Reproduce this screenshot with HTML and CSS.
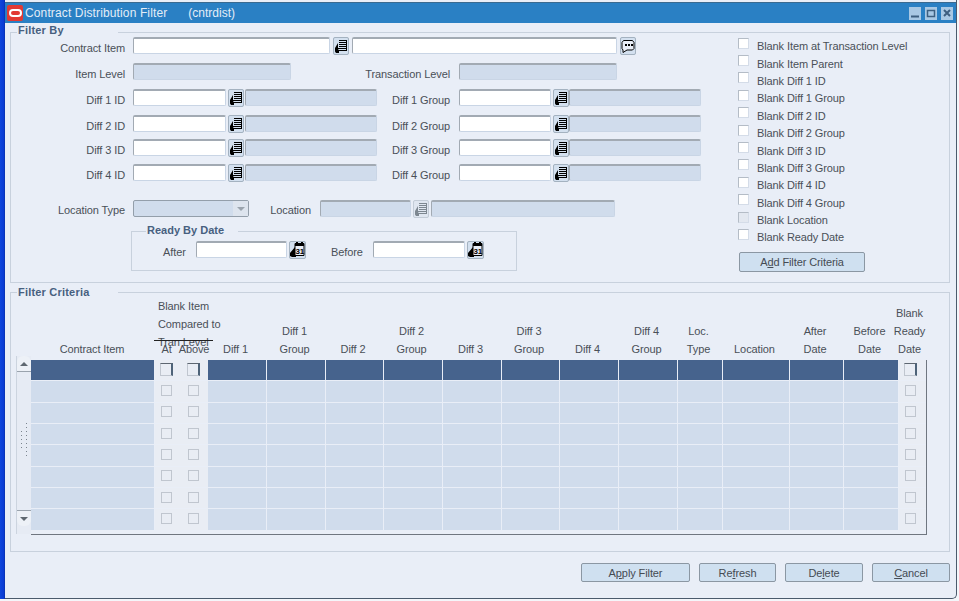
FILE: index.html
```html
<!DOCTYPE html>
<html lang="en">
<head>
<meta charset="utf-8">
<title>Contract Distribution Filter</title>
<link rel="stylesheet" href="styles.css">
</head>
<body>
<svg class="defs" width="0" height="0" aria-hidden="true">
  <symbol id="lookup" viewBox="0 0 16 18">
    <path d="M6 3.500h7M6 5.500h7M6 7.500h7M6 9.500h7M5 11.500h8M5 13.500h8M13.500 3v11" stroke="#000" fill="none"/>
    <path d="M5 6 2 11v3.500L3 16h3v-2.500L5 12z" fill="#000"/>
  </symbol>
  <symbol id="lookup-off" viewBox="0 0 16 18">
    <path d="M6 3.500h7M6 5.500h7M6 7.500h7M6 9.500h7M5 11.500h8M5 13.500h8M13.500 3v11" stroke="#7d8790" fill="none"/>
    <path d="M5 6 2 11v3.500L3 16h3v-2.500L5 12z" fill="#7d8790"/>
  </symbol>
  <symbol id="comment" viewBox="0 0 16 18">
    <path d="M3.500 3.500h9l1.500 2v6l-1.500 1.500H7L3 15.500V13L2 11.500v-6z" fill="#e9eef7" stroke="#000"/>
    <path d="M5 7h2v2H5zM8 7h2v2H8zM11 7h2v2h-2z" fill="#000"/>
  </symbol>
</svg>

<div class="screen">
  <div class="strip"></div>
  <div class="window">
    <header class="titlebar">
      <span class="logo"><span class="logo-ring"></span></span>
      <span class="title">Contract Distribution Filter</span>
      <span class="title-code">(cntrdist)</span>
      <span class="winctrls">
        <span class="winbtn"><svg viewBox="0 0 12 12" width="12" height="12"><path d="M2 8.500h8v2H2z" fill="#3d5f80"/></svg></span>
        <span class="winbtn"><svg viewBox="0 0 12 12" width="12" height="12"><path d="M2.500 3.500h7v6h-7z" fill="none" stroke="#3d5f80" stroke-width="1.500"/></svg></span>
        <span class="winbtn"><svg viewBox="0 0 12 12" width="12" height="12"><path d="m3 3 6 6M9 3 3 9" fill="none" stroke="#3d5f80" stroke-width="2"/></svg></span>
      </span>
    </header>

    <main class="content">
      <section class="group group-filter">
        <h2 class="legend">Filter By</h2>
        <div class="form">
          <div class="row">
            <label class="lbl">Contract Item</label>
            <span class="fld w197"></span>
            <span class="btn-ico m3"><svg width="16" height="18"><use href="#lookup"/></svg></span>
            <span class="fld w265 m3"></span>
            <span class="btn-ico m3"><svg width="16" height="18"><use href="#comment"/></svg></span>
          </div>
          <div class="row row-9">
            <label class="lbl">Item Level</label>
            <span class="fld off w158"></span>
            <label class="lbl2 w159">Transaction Level</label>
            <span class="fld off w158"></span>
          </div>
          <div class="row row-9">
            <label class="lbl">Diff 1 ID</label>
            <span class="fld w93"></span>
            <span class="btn-ico m2"><svg width="16" height="18"><use href="#lookup"/></svg></span>
            <span class="fld off w132 m1"></span>
            <label class="lbl2 w73">Diff 1 Group</label>
            <span class="fld w92"></span>
            <span class="btn-ico m2"><svg width="16" height="18"><use href="#lookup"/></svg></span>
            <span class="fld off w132"></span>
          </div>
          <div class="row row-9">
            <label class="lbl">Diff 2 ID</label>
            <span class="fld w93"></span>
            <span class="btn-ico m2"><svg width="16" height="18"><use href="#lookup"/></svg></span>
            <span class="fld off w132 m1"></span>
            <label class="lbl2 w73">Diff 2 Group</label>
            <span class="fld w92"></span>
            <span class="btn-ico m2"><svg width="16" height="18"><use href="#lookup"/></svg></span>
            <span class="fld off w132"></span>
          </div>
          <div class="row row-7">
            <label class="lbl">Diff 3 ID</label>
            <span class="fld w93"></span>
            <span class="btn-ico m2"><svg width="16" height="18"><use href="#lookup"/></svg></span>
            <span class="fld off w132 m1"></span>
            <label class="lbl2 w73">Diff 3 Group</label>
            <span class="fld w92"></span>
            <span class="btn-ico m2"><svg width="16" height="18"><use href="#lookup"/></svg></span>
            <span class="fld off w132"></span>
          </div>
          <div class="row row-8">
            <label class="lbl">Diff 4 ID</label>
            <span class="fld w93"></span>
            <span class="btn-ico m2"><svg width="16" height="18"><use href="#lookup"/></svg></span>
            <span class="fld off w132 m1"></span>
            <label class="lbl2 w73">Diff 4 Group</label>
            <span class="fld w92"></span>
            <span class="btn-ico m2"><svg width="16" height="18"><use href="#lookup"/></svg></span>
            <span class="fld off w132"></span>
          </div>
          <div class="row row-19 row-loc">
            <label class="lbl">Location Type</label>
            <span class="select"><span class="select-arrow"><svg width="10" height="6" viewBox="0 0 10 6"><path d="M1 1h8L5 5z" fill="#9aa3ad"/></svg></span></span>
            <label class="lbl2 w62">Location</label>
            <span class="fld off w91"></span>
            <span class="btn-ico off m2"><svg width="16" height="18"><use href="#lookup-off"/></svg></span>
            <span class="fld off w184 m2"></span>
          </div>
          <section class="group group-date">
            <h3 class="legend legend-date">Ready By Date</h3>
            <div class="row">
              <label class="lbl3 after">After</label>
              <span class="fld w91"></span>
              <span class="btn-ico m2"><svg width="17" height="18" viewBox="0 0 17 18"><path d="M6 2.500h9v12H6z" fill="#e9eef7" stroke="#000"/><path d="M6 3h9v2H6zM7 1h2v2H7zM12 1h2v2h-2z" fill="#000"/><path d="M6 6 1 12v3l2 1h4v-2H6z" fill="#000"/><text x="6.500" y="13" class="cal-text">31</text></svg></span>
              <label class="lbl3 before">Before</label>
              <span class="fld w92"></span>
              <span class="btn-ico m2"><svg width="17" height="18" viewBox="0 0 17 18"><path d="M6 2.500h9v12H6z" fill="#e9eef7" stroke="#000"/><path d="M6 3h9v2H6zM7 1h2v2H7zM12 1h2v2h-2z" fill="#000"/><path d="M6 6 1 12v3l2 1h4v-2H6z" fill="#000"/><text x="6.500" y="13" class="cal-text">31</text></svg></span>
            </div>
          </section>
        </div>

        <div class="checks">
          <div class="chk-row"><span class="chk"></span>Blank Item at Transaction Level</div>
          <div class="chk-row"><span class="chk"></span>Blank Item Parent</div>
          <div class="chk-row"><span class="chk"></span>Blank Diff 1 ID</div>
          <div class="chk-row"><span class="chk"></span>Blank Diff 1 Group</div>
          <div class="chk-row"><span class="chk"></span>Blank Diff 2 ID</div>
          <div class="chk-row"><span class="chk"></span>Blank Diff 2 Group</div>
          <div class="chk-row"><span class="chk"></span>Blank Diff 3 ID</div>
          <div class="chk-row"><span class="chk"></span>Blank Diff 3 Group</div>
          <div class="chk-row"><span class="chk"></span>Blank Diff 4 ID</div>
          <div class="chk-row"><span class="chk"></span>Blank Diff 4 Group</div>
          <div class="chk-row"><span class="chk chk-off"></span>Blank Location</div>
          <div class="chk-row"><span class="chk"></span>Blank Ready Date</div>
          <button class="btn btn-add" type="button">A<u>d</u>d Filter Criteria</button>
        </div>
      </section>

      <section class="group group-criteria">
        <h2 class="legend legend-criteria">Filter Criteria</h2>
        <div class="scroller">
          <div class="scrollbar">
            <span class="sb-btn sb-up"><svg width="10" height="6" viewBox="0 0 10 6"><path d="M1 5h8L5 1z" fill="#5f6871"/></svg></span>
            <span class="sb-grip"><svg width="10" height="38" viewBox="0 0 10 38"><path d="M8 1 7 2M8 5 7 6M8 9 7 10M8 13 7 14M8 17 7 18M8 21 7 22M8 25 7 26M8 29 7 30M8 33 7 34M3 9 2 10M3 13 2 14M3 17 2 18M3 21 2 22M3 25 2 26" stroke="#7b858f" fill="none"/></svg></span>
            <span class="sb-btn sb-down"><svg width="10" height="6" viewBox="0 0 10 6"><path d="M1 1h8L5 5z" fill="#5f6871"/></svg></span>
          </div>
          <div class="tablecol">
            <div class="cols thead">
              <div class="th th-near">Contract Item</div>
              <div class="th-group">Blank Item<br>Compared to<br>Tran Level</div>
              <div class="th th-near c2">At</div>
              <div class="th th-wide c3">Above</div>
              <div class="th c4">Diff 1</div>
              <div class="th">Diff 1<br>Group</div>
              <div class="th">Diff 2</div>
              <div class="th">Diff 2<br>Group</div>
              <div class="th">Diff 3</div>
              <div class="th">Diff 3<br>Group</div>
              <div class="th">Diff 4</div>
              <div class="th">Diff 4<br>Group</div>
              <div class="th">Loc.<br>Type</div>
              <div class="th">Location</div>
              <div class="th">After<br>Date</div>
              <div class="th">Before<br>Date</div>
              <div class="th th-last">Blank<br>Ready<br>Date</div>
            </div>
            <div class="tbody">
              <div class="cols tr tr-on"><i class="td"></i><i class="tc"><b class="cb"></b></i><i class="tc"><b class="cb"></b></i><i class="td"></i><i class="td"></i><i class="td"></i><i class="td"></i><i class="td"></i><i class="td"></i><i class="td"></i><i class="td"></i><i class="td"></i><i class="td"></i><i class="td"></i><i class="td"></i><i class="tc tc-last"><b class="cb"></b></i></div>
              <div class="cols tr"><i class="td"></i><i class="tc"><b class="cb"></b></i><i class="tc"><b class="cb"></b></i><i class="td"></i><i class="td"></i><i class="td"></i><i class="td"></i><i class="td"></i><i class="td"></i><i class="td"></i><i class="td"></i><i class="td"></i><i class="td"></i><i class="td"></i><i class="td"></i><i class="tc tc-last"><b class="cb"></b></i></div>
              <div class="cols tr"><i class="td"></i><i class="tc"><b class="cb"></b></i><i class="tc"><b class="cb"></b></i><i class="td"></i><i class="td"></i><i class="td"></i><i class="td"></i><i class="td"></i><i class="td"></i><i class="td"></i><i class="td"></i><i class="td"></i><i class="td"></i><i class="td"></i><i class="td"></i><i class="tc tc-last"><b class="cb"></b></i></div>
              <div class="cols tr"><i class="td"></i><i class="tc"><b class="cb"></b></i><i class="tc"><b class="cb"></b></i><i class="td"></i><i class="td"></i><i class="td"></i><i class="td"></i><i class="td"></i><i class="td"></i><i class="td"></i><i class="td"></i><i class="td"></i><i class="td"></i><i class="td"></i><i class="td"></i><i class="tc tc-last"><b class="cb"></b></i></div>
              <div class="cols tr"><i class="td"></i><i class="tc"><b class="cb"></b></i><i class="tc"><b class="cb"></b></i><i class="td"></i><i class="td"></i><i class="td"></i><i class="td"></i><i class="td"></i><i class="td"></i><i class="td"></i><i class="td"></i><i class="td"></i><i class="td"></i><i class="td"></i><i class="td"></i><i class="tc tc-last"><b class="cb"></b></i></div>
              <div class="cols tr"><i class="td"></i><i class="tc"><b class="cb"></b></i><i class="tc"><b class="cb"></b></i><i class="td"></i><i class="td"></i><i class="td"></i><i class="td"></i><i class="td"></i><i class="td"></i><i class="td"></i><i class="td"></i><i class="td"></i><i class="td"></i><i class="td"></i><i class="td"></i><i class="tc tc-last"><b class="cb"></b></i></div>
              <div class="cols tr"><i class="td"></i><i class="tc"><b class="cb"></b></i><i class="tc"><b class="cb"></b></i><i class="td"></i><i class="td"></i><i class="td"></i><i class="td"></i><i class="td"></i><i class="td"></i><i class="td"></i><i class="td"></i><i class="td"></i><i class="td"></i><i class="td"></i><i class="td"></i><i class="tc tc-last"><b class="cb"></b></i></div>
              <div class="cols tr"><i class="td"></i><i class="tc"><b class="cb"></b></i><i class="tc"><b class="cb"></b></i><i class="td"></i><i class="td"></i><i class="td"></i><i class="td"></i><i class="td"></i><i class="td"></i><i class="td"></i><i class="td"></i><i class="td"></i><i class="td"></i><i class="td"></i><i class="td"></i><i class="tc tc-last"><b class="cb"></b></i></div>
            </div>
          </div>
        </div>
      </section>

      <footer class="actions">
        <button class="btn w109" type="button">A<u>p</u>ply Filter</button>
        <button class="btn w77" type="button">Re<u>f</u>resh</button>
        <button class="btn w78" type="button">De<u>l</u>ete</button>
        <button class="btn w78" type="button"><u>C</u>ancel</button>
      </footer>
    </main>
  </div>
</div>
</body>
</html>
```

FILE: styles.css
```css
* { box-sizing: border-box; }
html, body { margin: 0; padding: 0; }
body {
  width: 959px;
  height: 601px;
  overflow: hidden;
  background: #f4f6fa;
  font: 11px/14px "Liberation Sans", Arial, sans-serif;
  letter-spacing: -0.1px;
  color: #4a5058;
}
.defs { position: absolute; }
.cal-text { font: bold 8px "Liberation Sans", Arial, sans-serif; fill: #000; }

.screen { display: flex; height: 599px; }
.strip {
  width: 5px;
  background: linear-gradient(90deg, #0f46dc 0, #0a3ad2 80%, #0a2f9e 100%);
}
.window {
  width: 952px;
  display: flex;
  flex-direction: column;
  background: #e9eef7;
  border-right: 1px solid #4a5a6c;
  border-bottom: 1px solid #4a5a6c;
  border-bottom-right-radius: 5px;
}

/* Title bar */
.titlebar {
  margin-top: 2px;
  height: 21px;
  flex: none;
  display: flex;
  align-items: center;
  padding-left: 2px;
  background: #2a80c4;
  border-top: 1px solid #3a6a90;
  color: #e4edf7;
  font-size: 12px;
  letter-spacing: 0;
}
.logo {
  width: 16px;
  height: 16px;
  background: #e23a34;
  display: flex;
  align-items: center;
  justify-content: center;
  border-radius: 2px;
}
.logo-ring {
  width: 13px;
  height: 8px;
  border: 2px solid #fff;
  border-radius: 4px;
}
.title { margin-left: 2px; letter-spacing: 0.13px; }
.title-code { margin-left: 21px; }
.winctrls { margin-left: auto; margin-right: 3px; display: flex; gap: 4px; }
.winbtn {
  width: 12px;
  height: 13px;
  background: #a8c8e4;
  display: flex;
  align-items: center;
  justify-content: center;
}

/* Content */
.content { flex: 1; padding: 9px 5px 0 5px; display: flex; flex-direction: column; }
.group { position: relative; border: 1px solid #c8d1dd; }
.group-filter { display: flex; height: 251px; width: 940px; }
.group-criteria { margin-top: 9px; height: 260px; width: 940px; }
.legend {
  position: absolute;
  left: 6px;
  top: -9px;
  width: 101px;
  margin: 0;
  padding-left: 1px;
  background: #e9eef7;
  color: #47607f;
  font-size: 11px;
  line-height: 13px;
  font-weight: bold;
  letter-spacing: 0.2px;
}
.legend-criteria { top: -7px; }
.form { width: 727px; padding-top: 4px; flex: none; }
.row { display: flex; align-items: center; height: 17px; }
.row-7 { margin-top: 7px; }
.row-8 { margin-top: 8px; }
.row-9 { margin-top: 9px; }
.row-19 { margin-top: 19px; }

.lbl { width: 114px; margin-right: 8px; padding-top: 4px; text-align: right; flex: none; }
.lbl2 { margin-right: 9px; padding-top: 4px; text-align: right; flex: none; }
.lbl3 { margin-right: 9px; padding-top: 4px; flex: none; }
.row-loc .lbl, .row-loc .lbl2 { padding-top: 2px; }
.after { width: 24px; }
.before { width: 33px; margin-left: 25px; }

.fld {
  display: block;
  height: 17px;
  flex: none;
  background: #fff;
  border-style: solid;
  border-width: 2px 1px 1px 1px;
  border-color: #a2aab3 #c9d5e5 #c9d5e5 #a2aab3;
  border-radius: 2px;
}
.fld.off { background: #d0dcec; }
.w62 { width: 62px; }
.w73 { width: 73px; }
.w91 { width: 91px; }
.w92 { width: 92px; }
.w93 { width: 93px; }
.w132 { width: 132px; }
.w158 { width: 158px; }
.w159 { width: 159px; }
.w184 { width: 184px; }
.w197 { width: 197px; }
.w265 { width: 265px; }
.m1 { margin-left: 1px; }
.m2 { margin-left: 2px; }
.m3 { margin-left: 3px; }

.btn-ico {
  flex: none;
  height: 18px;
  display: flex;
  background: #d3e0ef;
  border-radius: 2px;
  outline: 1px solid #a4b2c0;
  outline-offset: -1px;
}
.btn-ico.off { background: #dfe6f0; outline-color: #c3ccd7; }

.select {
  width: 116px;
  height: 17px;
  flex: none;
  display: flex;
  justify-content: flex-end;
  background: #d0dcec;
  border: 1px solid #939eaa;
  border-radius: 2px;
}
.select-arrow {
  width: 15px;
  background: #dde4ee;
  display: flex;
  align-items: center;
  justify-content: center;
}

.group-date {
  margin: 14px 0 0 120px;
  width: 386px;
  height: 40px;
  padding: 9px 0 0 31px;
}
.legend-date { left: 14px; top: -8px; width: 92px; padding-left: 1px; letter-spacing: 0; }

/* Checkbox column */
.checks { padding-top: 4.500px; }
.chk-row { display: flex; align-items: center; height: 17.400px; white-space: nowrap; }
.chk {
  width: 11px;
  height: 11px;
  margin: -6px 8px 0 0;
  background: #fff;
  border: 1px solid;
  border-color: #b4bcc6 #d4dce8 #d4dce8 #b4bcc6;
}
.chk-off { background: #e3e8f0; }
.btn {
  font: 11px/14px "Liberation Sans", Arial, sans-serif;
  letter-spacing: -0.1px;
  color: #454b53;
  height: 19px;
  padding: 0;
  background: #cfe0f0;
  border: 1px solid #8b97a3;
  border-radius: 2px;
}
.btn-add { width: 126px; height: 20px; margin: 6px 0 0 1px; }

/* Table */
.scroller { display: flex; padding-left: 5px; }
.scrollbar {
  width: 15px;
  margin-top: 63px;
  height: 178px;
  display: flex;
  flex-direction: column;
  align-items: center;
  background: #e6ebf4;
  border-left: 1px solid #ccd4df;
}
.sb-btn { width: 100%; height: 16px; flex: none; display: flex; align-items: center; justify-content: center; }
.sb-up { border-bottom: 1px solid #9aa3ad; border-radius: 6px 6px 0 0; background: #edf1f7; }
.sb-down { border-top: 1px solid #9aa3ad; border-radius: 0 0 6px 6px; background: #edf1f7; }
.sb-grip { margin-top: 50px; flex: none; height: 88px; }

.tablecol { width: 896px; }
.cols {
  display: grid;
  grid-template-columns: 124px 25px 28px 59px 59px 58px 59px 59px 58px 59px 59px 45px 67px 54px 55px 27px;
}
.thead { height: 67px; grid-template-rows: 67px; white-space: nowrap; }
.th {
  grid-row: 1;
  align-self: end;
  padding: 0 4px 2px 0;
  text-align: center;
  line-height: 18px;
}
.th-near { padding-right: 2px; }
.th-wide { margin: 0 -3px; padding-right: 0; }
.th-last { margin-left: -6px; padding-right: 0; }
.th-group {
  grid-row: 1;
  grid-column: 2 / 4;
  margin-top: 4px;
  padding-left: 3px;
  height: 54px;
  line-height: 18px;
  position: relative;
}
.th-group::after {
  content: "";
  position: absolute;
  left: -1px;
  top: 43px;
  width: 59px;
  height: 1px;
  background: #222;
}
.c2 { grid-column: 2; }
.c3 { grid-column: 3; }
.c4 { grid-column: 4; }

.tbody {
  display: grid;
  grid-auto-rows: 20.340px;
  row-gap: 1px;
  height: 175px;
  padding-bottom: 4px;
  border-right: 1px solid #6f7680;
  border-bottom: 1px solid #6f7680;
}
.td { display: block; background: #d0dcec; border-right: 1px solid #e9eef7; }
.tc { display: flex; align-items: center; justify-content: center; padding-right: 2px; background: #e9edf4; }
.tc-last { padding-right: 4px; }
.tr-on .td { background: #46638d; }
.cb { width: 11px; height: 11px; margin-top: -2px; border: 1px solid #c0c6cf; }
.tr-on .cb {
  width: 13px;
  height: 13px;
  border-top: 1px solid #5d6670;
  border-right: 2px solid #4e6378;
}

/* Footer */
.actions {
  display: flex;
  justify-content: flex-end;
  gap: 9px;
  margin-top: 11px;
  width: 940px;
}
.w109 { width: 109px; }
.w77 { width: 77px; }
.w78 { width: 78px; }
```
